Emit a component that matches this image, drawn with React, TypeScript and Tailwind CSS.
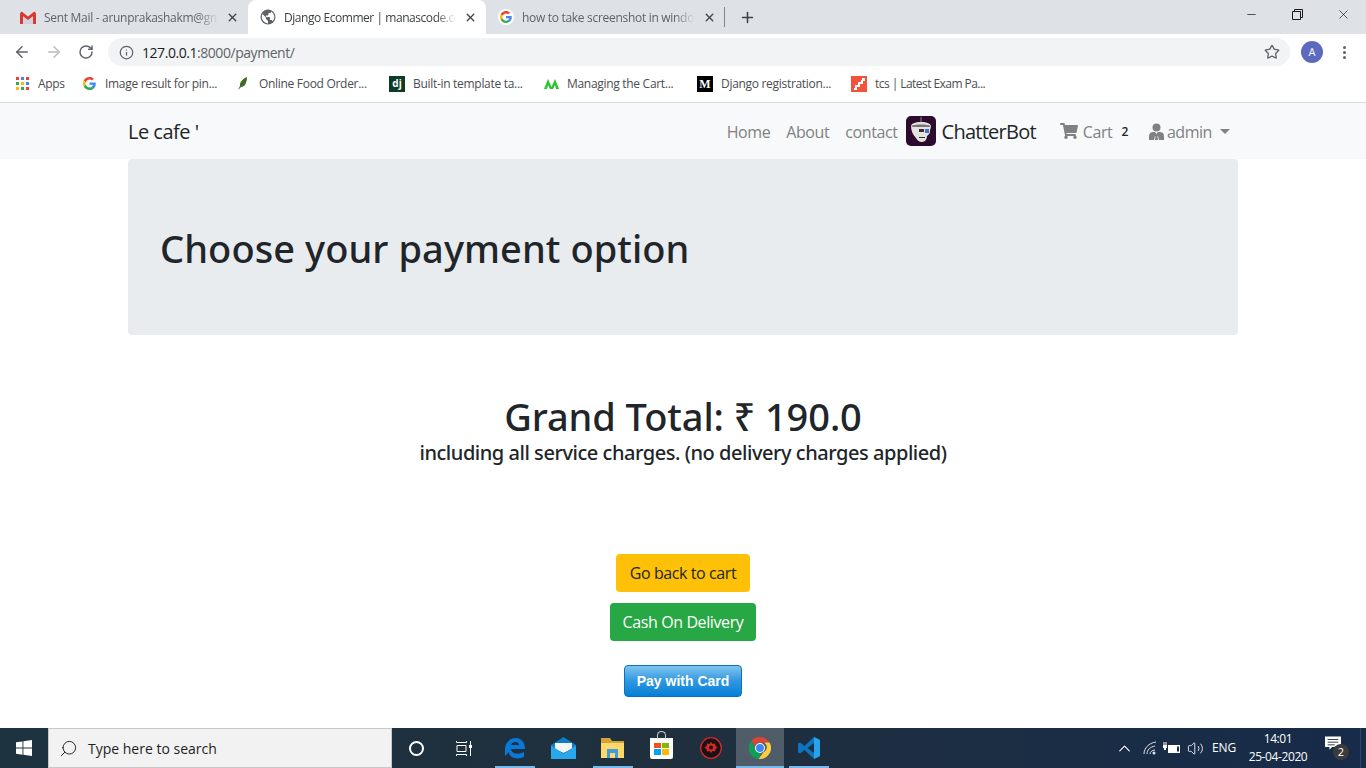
import { ArrowLeft, ArrowRight, RotateCw, Info, Star, X, Plus, Minus, Search, ChevronUp, Volume2 } from "lucide-react";

const ui = "font-['Open_Sans','Noto_Sans',sans-serif]";

function GoogleG({ size = 16 }: { size?: number }) {
  return (
    <svg width={size} height={size} viewBox="0 0 48 48" className="shrink-0">
      <path fill="#EA4335" d="M24 9.5c3.5 0 6.7 1.2 9.2 3.6l6.9-6.9C35.9 2.4 30.5 0 24 0 14.6 0 6.5 5.4 2.6 13.2l8 6.2C12.5 13.7 17.800 9.500 24 9.500z" />
      <path fill="#4285F4" d="M47 24.500c0-1.600-.1-3.100-.4-4.500H24v9h12.900c-.6 3-2.200 5.500-4.700 7.200l7.700 6c4.500-4.200 7.100-10.300 7.100-17.700z" />
      <path fill="#FBBC05" d="M10.500 28.600c-.5-1.400-.8-3-.8-4.600s.3-3.200.8-4.600l-8-6.200C.9 16.500 0 20.100 0 24s.9 7.500 2.600 10.800l7.900-6.200z" />
      <path fill="#34A853" d="M24 48c6.500 0 11.900-2.100 15.900-5.800l-7.700-6c-2.200 1.400-4.900 2.300-8.200 2.300-6.200 0-11.500-4.200-13.400-9.900l-8 6.200C6.500 42.600 14.600 48 24 48z" />
    </svg>
  );
}

function GmailIcon() {
  return (
    <svg width="16" height="13" viewBox="0 0 16 13" className="shrink-0">
      <path fill="#d93a30" d="M0 2.200 1.700.6 8 5.400 14.300.6 16 2.200V13h-3V5.200L8 9 3 5.200V13H0z" />
      <path fill="#a9b0b6" fillOpacity="0.25" d="M3 5.200 8 9l5-3.800V13H3z" />
    </svg>
  );
}

function GlobeIcon() {
  return (
    <svg width="16" height="16" viewBox="0 0 16 16" className="shrink-0">
      <circle cx="8" cy="8" r="7.500" fill="#5f6368" />
      <path fill="#fff" d="M2.500 5 6 8.500V10l2 2v2.400C5 14.200 2 11.500 1.800 8c0-1 .3-2.100.7-3zM11 2.500c2 1 3.300 3.100 3.300 5.500 0 1.600-.6 3.100-1.600 4.200-.2-.6-.8-1.200-1.500-1.200H10V9c0-.5-.5-1-1-1H6V6.500h1.500c.5 0 1-.5 1-1V4H10c.6 0 1-.5 1-1z" />
    </svg>
  );
}

function Tab({ title, icon, active, width }: { title: string; icon: React.ReactNode; active?: boolean; width: string }) {
  return (
    <div className={`${width} h-[34px] flex items-center gap-[8px] pl-[12px] pr-[9px] relative ${active ? "bg-white rounded-t-[8px]" : ""}`}>
      {icon}
      <span className={`flex-1 overflow-hidden whitespace-nowrap pt-px text-[12px] [mask-image:linear-gradient(to_right,black_88%,transparent)] ${active ? "tracking-[-0.45px] text-[#3c4043]" : "tracking-[-0.3px] text-[#5f6368]"}`}>{title}</span>
      <X size={13} strokeWidth={2.6} className="text-[#44474b] shrink-0" />
    </div>
  );
}

function Bookmark({ icon, label, width, tight }: { icon: React.ReactNode; label: string; width: string; tight?: boolean }) {
  return (
    <div className={`${width} flex items-center gap-[8px] shrink-0`}>
      <span className="w-[16px] h-[16px] flex items-center justify-center shrink-0">{icon}</span>
      <span className={`text-[12px] text-[#4a4d51] whitespace-nowrap ${tight ? "tracking-[-0.55px]" : "tracking-[-0.3px]"}`}>{label}</span>
    </div>
  );
}

function AppsGrid() {
  const colors = ["#ea4335", "#4285f4", "#ea4335", "#34a853", "#fbbc05", "#4285f4", "#fbbc05", "#34a853", "#ea4335"];
  return (
    <div className="grid grid-cols-3 gap-[2px] w-[13px]">
      {colors.map((c, i) => (
        <span key={i} className="w-[3px] h-[3px]" style={{ background: c }} />
      ))}
    </div>
  );
}

function BrowserChrome() {
  return (
    <div className={`${ui} shrink-0`}>
      <div className="h-[34px] bg-[#dee1e6] flex items-center pl-[8px]">
        <Tab width="w-[240px]" title="Sent Mail - arunprakashakm@gmail" icon={<GmailIcon />} />
        <Tab active width="w-[238px]" title="Django Ecommer | manascode.com" icon={<GlobeIcon />} />
        <Tab width="w-[239px]" title="how to take screenshot in windows" icon={<span className="w-[16px] h-[16px] rounded-full bg-white flex items-center justify-center shrink-0"><GoogleG size={12} /></span>} />
        <span className="w-px h-[20px] bg-[#808488] -ml-[1px]" />
        <Plus size={17} strokeWidth={2.2} className="text-[#3c4043] ml-[14px]" />
        <div className="ml-auto flex items-center h-full text-[#1a1a1a]">
          <span className="w-[46px] flex justify-center pb-[6px]"><Minus size={13} strokeWidth={1.3} /></span>
          <span className="w-[46px] flex justify-center pb-[6px]">
            <svg width="11" height="11" viewBox="0 0 11 11" fill="none" stroke="#1a1a1a"><path d="M.5 2.500h8v8h-8zM2.500 2.500v-2h8v8h-2" /></svg>
          </span>
          <span className="w-[46px] flex justify-center pb-[6px]"><X size={15} strokeWidth={1.1} /></span>
        </div>
      </div>
      <div className="h-[34px] bg-white flex items-center pl-[13px] pt-[2px]">
        <ArrowLeft size={18} strokeWidth={2} className="text-[#5f6368]" />
        <ArrowRight size={18} strokeWidth={2} className="text-[#babcbe] ml-[14px]" />
        <RotateCw size={16} strokeWidth={2.2} className="text-[#5f6368] ml-[15px]" />
        <div className="ml-[14px] w-[1182px] h-[28px] rounded-full bg-[#f1f3f4] flex items-center pl-[11px] pr-[10px]">
          <Info size={15} strokeWidth={2} className="text-[#5f6368]" />
          <span className="ml-[8px] text-[14px] tracking-[-0.45px] text-[#202124]">127.0.0.1<span className="text-[#5f6368]">:8000/payment/</span></span>
          <Star size={16} strokeWidth={2} className="ml-auto text-[#5f6368]" />
        </div>
        <span className="ml-[11px] w-[22px] h-[22px] rounded-full bg-[#5c6bc0] text-white text-[11px] flex items-center justify-center">A</span>
        <span className="ml-[20px] flex flex-col gap-[2px]">
          <span className="w-[3px] h-[3px] rounded-full bg-[#5f6368]" />
          <span className="w-[3px] h-[3px] rounded-full bg-[#5f6368]" />
          <span className="w-[3px] h-[3px] rounded-full bg-[#5f6368]" />
        </span>
      </div>
      <div className="h-[35px] bg-white border-b border-[#d9dadc] flex items-center pl-[14px] pb-[3px]">
        <Bookmark width="w-[67px]" icon={<AppsGrid />} label="Apps" />
        <Bookmark width="w-[154px]" icon={<GoogleG size={13} />} label="Image result for pin..." />
        <Bookmark width="w-[154px]" icon={<svg width="10" height="13" viewBox="0 0 10 13"><path fill="#3f6b24" d="M9 0C4 2 1.500 6 2 9L0 13l3-3c4 0 6-5 6-10z" /></svg>} label="Online Food Order..." />
        <Bookmark width="w-[154px]" icon={<span className="w-[16px] h-[16px] bg-[#0c3c26] text-white text-[10px] font-bold flex items-center justify-center">dj</span>} label="Built-in template ta..." />
        <Bookmark width="w-[154px]" icon={<svg width="15" height="10" viewBox="0 0 15 10"><path fill="#26c72a" d="M0 10 4 0l3.500 8L11 0l4 10h-3L11 6l-2 4H6L4 6l-1 4z" /></svg>} label="Managing the Cart..." />
        <Bookmark width="w-[154px]" icon={<span className="w-[16px] h-[16px] bg-black text-white text-[12px] font-bold font-['Liberation_Serif',serif] flex items-center justify-center">M</span>} label="Django registration..." />
        <Bookmark tight width="w-[150px]" icon={<svg width="16" height="16" viewBox="0 0 16 16"><path fill="#f4523b" d="M0 0h16v16H0z" /><path fill="#fff" d="M11 2h3v3h-2v3h-3v3H6v3H3v-2h1V9h3V6h3V4h1z" /></svg>} label="tcs | Latest Exam Pa..." />
      </div>
    </div>
  );
}

function Navbar() {
  return (
    <nav className="h-[56px] bg-[#f8f9fa] shrink-0 flex items-center pl-[128px] pr-[136px] text-[16px] tracking-[-0.4px] text-[#808182]">
      <span className="text-[20px] tracking-[-0.5px] text-[#212529] pt-[2px]">Le cafe '</span>
      <div className="ml-auto flex items-center">
        <span className="pt-[2px]">Home</span>
        <span className="ml-[16px] pt-[2px]">About</span>
        <span className="ml-[16px] pt-[2px]">contact</span>
        <svg width="30" height="30" viewBox="0 0 30 30" className="ml-[8px]">
          <rect width="30" height="30" rx="5" fill="#2d0a2e" />
          <path fill="#8a868a" d="M14.500 1h1v6h-1z" />
          <path fill="#e6e3de" d="M5 10c0-2 4-4 10-4s10 2 10 4c0 2-1 3-1 5 0 3-2 4-3 5 0 3-2 6-5 6-3 0-5-2-6-4-3-3-5-7-5-12z" />
          <path fill="#77747a" d="M5 10c3-2 17-2 20 0-1 1-3 1-4 1H9c-1 0-3 0-4-1z" />
          <path fill="#3f78c9" d="M19 13h4v4h-4z" />
          <path fill="#3a2a3c" d="M13 13h5v3h-5zM13 21h6v1h-6z" />
        </svg>
        <span className="ml-[6px] pt-[2px] text-[20px] tracking-[-0.75px] text-[#212529]">ChatterBot</span>
        <svg width="18" height="16" viewBox="0 0 576 512" className="ml-[24px]">
          <path fill="#808182" d="M528 301l47-208c4-15-8-29-23-29H159l-9-45C148 8 138 0 126 0H24C11 0 0 11 0 24v16c0 13 11 24 24 24h70l70 343c-17 10-28 28-28 49 0 31 25 56 56 56s56-25 56-56c0-16-6-30-17-40h210c-11 10-17 24-17 40 0 31 25 56 56 56s56-25 56-56c0-22-13-41-32-50l6-24c4-15-8-29-23-29H211l-7-32h301c11 0 21-8 23-20z" />
        </svg>
        <span className="ml-[5px] pt-[2px]">Cart</span>
        <span className="ml-[9px] pt-[2px] text-[12px] font-semibold text-[#212529]">2</span>
        <svg width="15" height="17" viewBox="0 0 15 17" className="ml-[21px]">
          <circle cx="7.500" cy="4.500" r="4" fill="#808182" />
          <path fill="#808182" d="M0 17v-4c0-2.500 2-4 4-4h2l1.500 2L9 9h2c2 0 4 1.500 4 4v4h-5l-1-4H6l-1 4z" />
          <path fill="#808182" d="M6.500 13h2l.5 4H6z" />
        </svg>
        <span className="ml-[3px] pt-[2px] tracking-[-0.45px]">admin</span>
        <span className="ml-[8px] w-0 h-0 border-x-[5px] border-x-transparent border-t-[5px] border-t-[#808182]" />
      </div>
    </nav>
  );
}

function Taskbar() {
  const wrap = "w-[49px] h-full flex items-center justify-center relative shrink-0";
  const line = "absolute bottom-0 left-[5px] right-[4px] h-[2px] bg-[#76b9ed]";
  return (
    <div className={`${ui} h-[40px] shrink-0 bg-gradient-to-r from-[#1d3340] via-[#1f2f3d] to-[#172b4a] flex items-center text-white`}>
      <div className="w-[48px] h-full flex items-center justify-center">
        <svg width="16" height="16" viewBox="0 0 16 16"><path fill="#fff" d="M0 2.300 6.500 1.400v6.200H0zM7.400 1.300 16 0v7.600H7.400zM0 8.500h6.500v6.200L0 13.800zM7.400 8.500H16V16l-8.600-1.200z" /></svg>
      </div>
      <div className="w-[344px] h-full bg-[#f2f2f2] border border-[#c8c8c8] flex items-center pl-[10px] text-[14px] text-[#1f1f1f]">
        <Search size={19} strokeWidth={1.2} className="-scale-x-100" />
        <span className="ml-[10px]">Type here to search</span>
      </div>
      <div className="w-[48px] h-full flex items-center justify-center"><span className="w-[15px] h-[15px] rounded-full border-2 border-white" /></div>
      <div className="w-[48px] h-full flex items-center justify-center">
        <svg width="16" height="15" viewBox="0 0 16 15" fill="none" stroke="#fff"><path d="M.5 0v1.500h10V0M1 4.500h9v6H1zM.5 15v-1.500h10V15M14.500 0v15" /><path d="M13 4h3v3h-3z" fill="#fff" stroke="none" /></svg>
      </div>
      <div className={`${wrap} ml-[2px]`}>
        <svg width="22" height="22" viewBox="0 0 22 22"><path fill="#0a78d7" d="M1 11C2 4 7 1 12 1c5 0 9 4 9 11H7c0 5 8 6 13 3v5c-7 3-15 1-15-5-2 2-3 3-4 4 0-3 0-5 0-8zM7 8h8c0-4-7-4-8 0z" /></svg>
        <span className={line} />
      </div>
      <div className={wrap}>
        <svg width="25" height="22" viewBox="0 0 25 22"><path fill="#0f7cc9" d="M12.500 0 25 8v3H0V8z" /><path fill="#f2f6fa" d="M4 6h17v6l-8.500 4L4 12z" /><path fill="#28a8ea" d="M0 8.500l12.500 8 12.500-8V22H0z" /></svg>
      </div>
      <div className={wrap}>
        <svg width="23" height="20" viewBox="0 0 23 20"><path fill="#d6a23a" d="M0 0h9l2 3h12v17H0z" /><path fill="#ffd86b" d="M0 5h23v15H0z" /><path fill="#3f9be0" d="M6 11h11v9h-3v-5H9v5H6z" /></svg>
        <span className={line} />
      </div>
      <div className={wrap}>
        <div className="w-[23px] h-[21px] bg-white rounded-b-[2px] grid grid-cols-2 gap-[1px] p-[4px] pt-[5px] relative">
          <span className="bg-[#f25022]" /><span className="bg-[#7fba00]" /><span className="bg-[#00a4ef]" /><span className="bg-[#ffb900]" />
          <span className="absolute -top-[7px] left-[7px] w-[9px] h-[8px] rounded-t-full border border-b-0 border-[#d0d0d0]" />
        </div>
      </div>
      <div className={wrap}>
        <svg width="22" height="22" viewBox="0 0 22 22"><circle cx="11" cy="11" r="10.300" fill="#1a1214" stroke="#d62828" strokeWidth="1.300" /><path fill="#d62828" d="M11 5l1.500 2 2.500-.5.500 2.500 2 1.500-2 1.500-.5 2.500-2.500-.5L11 16l-1.500-2-2.500.5-.5-2.500-2-1.500 2-1.500.5-2.500 2.500.5z" /><circle cx="11" cy="10.500" r="2" fill="#1a1214" /></svg>
      </div>
      <div className="w-[48px] h-full flex items-center justify-center relative bg-[#4f5d68] shrink-0 ml-[1px]">
        <svg width="22" height="22" viewBox="0 0 22 22">
          <path fill="#db4437" d="M11 0a11 11 0 0 1 9.500 5.500H11a5.500 5.500 0 0 0-5.300 4L2.300 3.700A11 11 0 0 1 11 0z" />
          <path fill="#0f9d58" d="M2.300 3.700l4 7a5.500 5.500 0 0 0 6.300 5.500l-3 5.700A11 11 0 0 1 2.300 3.700z" />
          <path fill="#ffcd40" d="M20.500 5.500A11 11 0 0 1 9.600 21.900l4.800-6.600a5.500 5.500 0 0 0 .7-9.800z" />
          <circle cx="11" cy="11" r="5" fill="#fff" />
          <circle cx="11" cy="11" r="4" fill="#4285f4" />
        </svg>
        <span className="absolute bottom-0 left-0 right-0 h-[2px] bg-[#76b9ed]" />
      </div>
      <div className={wrap}>
        <svg width="24" height="24" viewBox="0 0 24 24"><path fill="#0e74c2" d="M17 1 7.500 10 3 6.500 1 7.500v9l2 1L7.500 14l9.500 9 6-3V4zM17 7v10l-6.500-5z" /><path fill="#28a3ea" d="M17 1l6 3v16l-6 3z" /></svg>
        <span className={line} />
      </div>
      <div className="ml-auto flex items-center h-full pr-[5px] relative">
        <ChevronUp size={19} strokeWidth={1.4} className="mr-[9px]" />
        <svg width="14" height="14" viewBox="0 0 14 14" fill="none" stroke="#dfe5ea" className="mr-[5px]"><path d="M1 13C1 7 6 2 13 1M4 13c0-4 3-7 8-8M7 13c0-2 2-4 5-4" /><circle cx="11" cy="12" r="1.500" fill="#dfe5ea" stroke="none" /></svg>
        <svg width="18" height="12" viewBox="0 0 18 12" className="mr-[7px]"><path fill="#fff" d="M6 3h12v8H6z" /><path fill="#1a2b45" d="M15 4.500h2v5h-2z" /><path fill="#fff" d="M1 3h4v3H4v2H2V6H1zM1.500 0h1v3h-1zM3.500 0h1v3h-1z" /></svg>
        <Volume2 size={17} strokeWidth={1.2} className="mr-[8px]" />
        <span className="text-[12px] w-[24px] text-center tracking-[-0.2px] mr-[6px]">ENG</span>
        <div className="w-[72px] text-center text-[12px] tracking-[-0.4px] leading-[18px] mr-[10px]">
          <div>14:01</div>
          <div>25-04-2020</div>
        </div>
        <div className="w-[24px] h-[24px] relative mr-[13px]">
          <svg width="16" height="15" viewBox="0 0 18 16" className="absolute left-[1px] top-0"><path fill="#fff" d="M0 0h18v12H8l-3 3v-3H0z" /><path stroke="#1a2b45" d="M3 3.500h12M3 6.500h12M3 9.500h8" /></svg>
          <span className="absolute left-[9px] top-[8px] w-[16px] h-[16px] rounded-full bg-[#3b3b3b] text-[11px] leading-[16px] text-center">2</span>
        </div>
        <span className="absolute right-[5px] top-0 bottom-0 w-px bg-[#33475a]" />
      </div>
    </div>
  );
}

export default function App() {
  return (
    <div className="h-screen w-full flex flex-col overflow-hidden bg-white font-['Open_Sans','Noto_Sans',sans-serif] text-[#212529]">
      <BrowserChrome />
      <Navbar />
      <main className="flex-1 flex flex-col items-center">
        <div className="w-[1110px] h-[176px] shrink-0 bg-[#e9ecef] rounded-[4px] pl-[32px] pt-[65px]">
          <h1 className="font-['Noto_Sans',sans-serif] text-[38px] leading-[48px] font-medium tracking-[0.07px]">Choose your payment option</h1>
        </div>
        <h2 className="mt-[57px] font-['Noto_Sans',sans-serif] text-[38px] leading-[48px] font-medium tracking-[-0.1px]">Grand Total: ₹ 190.0</h2>
        <h3 className="pt-px h-[24px] font-['Noto_Sans',sans-serif] text-[20px] leading-[24px] font-medium tracking-[-0.46px]">including all service charges. (no delivery charges applied)</h3>
        <button className="mt-[90px] h-[38px] px-[14px] rounded-[4px] bg-[#ffc107] text-[#212529] text-[16px] tracking-[-0.4px]">Go back to cart</button>
        <button className="mt-[11px] h-[38px] px-[13px] rounded-[4px] bg-[#28a745] text-white text-[16px] tracking-[-0.4px]">Cash On Delivery</button>
        <button className="mt-[24px] h-[32px] w-[118px] rounded-[4px] border border-[#0f6fb8] bg-gradient-to-b from-[#7dc5ee] via-[#2d97e0] to-[#0080d8] text-white text-[14px] font-bold font-['Liberation_Sans',sans-serif]">Pay with Card</button>
      </main>
      <Taskbar />
    </div>
  );
}
